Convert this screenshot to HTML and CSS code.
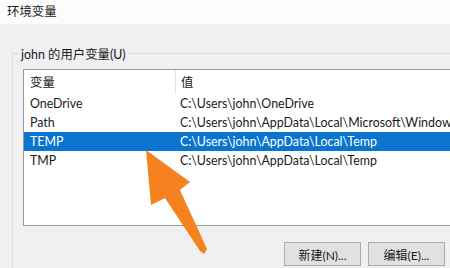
FILE: index.html
```html
<!DOCTYPE html>
<html lang="zh-CN">
<head>
  <meta charset="UTF-8" />
  <title>环境变量</title>
  <link rel="stylesheet" href="styles.css">
</head>
<body>
  <div class="window">
    <div class="titlebar">环境变量</div>
    <fieldset class="group">
      <legend>john 的用户变量(U)</legend>
      <div class="list">
        <div class="row head">
          <div class="col-name">变量</div>
          <div class="col-value">值</div>
        </div>
        <div class="row">
          <div class="col-name">OneDrive</div>
          <div class="col-value">C:\Users\john\OneDrive</div>
        </div>
        <div class="row">
          <div class="col-name">Path</div>
          <div class="col-value">C:\Users\john\AppData\Local\Microsoft\WindowsAp</div>
        </div>
        <div class="row selected">
          <div class="col-name">TEMP</div>
          <div class="col-value">C:\Users\john\AppData\Local\Temp</div>
        </div>
        <div class="row">
          <div class="col-name">TMP</div>
          <div class="col-value">C:\Users\john\AppData\Local\Temp</div>
        </div>
      </div>
      <div class="buttons">
        <button>新建(N)...</button>
        <button>编辑(E)...</button>
      </div>
    </fieldset>
  </div>

  <svg class="arrow" width="450" height="268" viewBox="0 0 450 268">
    <polygon points="146,150 190,182 180,190 207,249 204,254 200,251 165,198 151,205" fill="#f5821f"/>
  </svg>
</body>
</html>
```

FILE: styles.css
```css
body {
  margin: 0;
  background: #f0eff1;
  font-family: Lato, "Noto Sans CJK SC", sans-serif;
  font-size: 12.4px;
  color: #1a1a1a;
  width: 450px;
  height: 268px;
  overflow: hidden;
  position: relative;
}
.titlebar {
  height: 24px;
  line-height: 23px;
  padding-left: 7px;
  background: #fdfcfd;
}
.group {
  margin: 21px 0 0 12px;
  padding: 7px 0 0 10px;
  border: 1px solid #dcdbdd;
  border-right: none;
  border-bottom: none;
  height: 215px;
  overflow: hidden;
}
.group legend {
  margin-left: -4px;
  padding: 3px 2px 0;
  line-height: 14px;
}
.list {
  background: #fff;
  border: 1px solid #9a999c;
  border-right: none;
  height: 155px;
}
.row {
  display: flex;
  height: 19px;
  line-height: 19px;
  white-space: nowrap;
  overflow: hidden;
}
.row.head {
  height: 24px;
  line-height: 25px;
}
.col-name {
  width: 145px;
  padding-left: 6px;
  flex-shrink: 0;
}
.row.head .col-name {
  border-right: 1px solid #e5e5e5;
}
.col-value {
  padding-left: 5px;
}
.row.selected {
  background: #0a74cf;
  color: #fff;
}
.buttons {
  width: 422px;
  display: flex;
  justify-content: flex-end;
  gap: 7px;
  margin-top: 16px;
}
.buttons button {
  width: 77px;
  height: 24px;
  background: #e1e1e1;
  border: 1px solid #adadad;
  font-family: inherit;
  font-size: 12px;
  color: #1a1a1a;
  padding: 0;
}
.arrow {
  position: absolute;
  left: 0;
  top: 0;
}
```
